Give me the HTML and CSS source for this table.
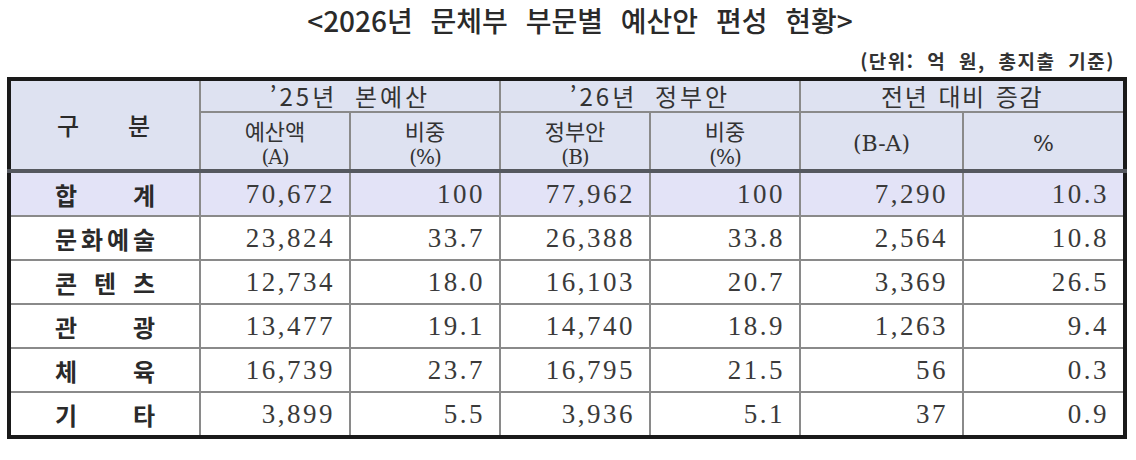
FILE: index.html
```html
<!DOCTYPE html>
<html lang="ko">
<head>
<meta charset="utf-8">
<link rel="stylesheet" href="styles.css">
</head>
<body>
<div class="page">
  <h1 class="title">&lt;2026년 문체부 부문별 예산안 편성 현황&gt;</h1>
  <div class="unit">(단위: 억 원, 총지출 기준)</div>
  <table class="budget">
    <colgroup>
      <col class="c-label"><col class="c-num"><col class="c-num"><col class="c-num"><col class="c-num"><col class="c-diff"><col class="c-pct">
    </colgroup>
    <thead>
      <tr class="h1">
        <th rowspan="2" class="label-head"><span class="dist"><span>구</span><span>분</span></span></th>
        <th colspan="2">’25년 본예산</th>
        <th colspan="2">’26년 정부안</th>
        <th colspan="2" class="tight">전년 대비 증감</th>
      </tr>
      <tr class="h2">
        <th><span class="stack"><span class="top">예산액</span><span class="sub">(A)</span></span></th>
        <th><span class="stack"><span class="top">비중</span><span class="sub">(%)</span></span></th>
        <th><span class="stack"><span class="top">정부안</span><span class="sub">(B)</span></span></th>
        <th><span class="stack"><span class="top">비중</span><span class="sub">(%)</span></span></th>
        <th><span class="single">(B-A)</span></th>
        <th><span class="single">%</span></th>
      </tr>
    </thead>
    <tbody>
      <tr class="total">
        <th><span class="dist"><span>합</span><span>계</span></span></th>
        <td>70,672</td><td>100</td><td>77,962</td><td>100</td><td>7,290</td><td>10.3</td>
      </tr>
      <tr>
        <th><span class="dist"><span>문</span><span>화</span><span>예</span><span>술</span></span></th>
        <td>23,824</td><td>33.7</td><td>26,388</td><td>33.8</td><td>2,564</td><td>10.8</td>
      </tr>
      <tr>
        <th><span class="dist"><span>콘</span><span>텐</span><span>츠</span></span></th>
        <td>12,734</td><td>18.0</td><td>16,103</td><td>20.7</td><td>3,369</td><td>26.5</td>
      </tr>
      <tr>
        <th><span class="dist"><span>관</span><span>광</span></span></th>
        <td>13,477</td><td>19.1</td><td>14,740</td><td>18.9</td><td>1,263</td><td>9.4</td>
      </tr>
      <tr>
        <th><span class="dist"><span>체</span><span>육</span></span></th>
        <td>16,739</td><td>23.7</td><td>16,795</td><td>21.5</td><td>56</td><td>0.3</td>
      </tr>
      <tr class="last">
        <th><span class="dist"><span>기</span><span>타</span></span></th>
        <td>3,899</td><td>5.5</td><td>3,936</td><td>5.1</td><td>37</td><td>0.9</td>
      </tr>
    </tbody>
  </table>
</div>
</body>
</html>
```

FILE: styles.css
```css
html, body {
  margin: 0;
  padding: 0;
  background: #ffffff;
}

.page {
  width: 1136px;
  height: 460px;
  overflow: hidden;
  padding: 0 9px 0 7px;
  box-sizing: border-box;
  color: #2b2b2b;
}

.title {
  margin: 0;
  padding: 2px 0 0 26px;
  height: 42px;
  box-sizing: border-box;
  text-align: center;
  font-family: "Noto Sans CJK KR", sans-serif;
  font-weight: 500;
  font-size: 28px;
  line-height: 36px;
  word-spacing: 10px;
  color: #2a2a2a;
}

.unit {
  height: 35px;
  text-align: right;
  padding: 7px 12px 0 0;
  box-sizing: border-box;
  font-family: "Noto Sans CJK KR", sans-serif;
  font-weight: 700;
  font-size: 19px;
  line-height: 24px;
  letter-spacing: 1.5px;
  word-spacing: 6px;
  color: #333;
}

.budget {
  width: 1120px;
  border-collapse: collapse;
  table-layout: fixed;
  border: 4px solid #1a1a1a;
}

.c-label { width: 191px; }
.c-num { width: 150px; }
.c-diff { width: 163px; }
.c-pct { width: 162px; }

.budget th,
.budget td {
  border: 2px solid #8a8a8a;
  padding: 0;
}

.budget thead th {
  background: #dee2f1;
  font-family: "Noto Sans CJK KR", sans-serif;
  font-weight: 400;
  color: #333;
  text-align: center;
}

.h1 th {
  height: 30px;
  font-size: 24px;
  line-height: 26px;
  letter-spacing: 3px;
  word-spacing: 8px;
}

.h1 th.tight {
  letter-spacing: 1.5px;
  word-spacing: 2px;
}

.h2 th {
  height: 56px;
  font-size: 22px;
  border-bottom: 4px solid #55585f;
}

.label-head {
  border-bottom: 4px solid #55585f !important;
}

.stack {
  display: inline-flex;
  flex-direction: column;
  align-items: center;
}

.top {
  line-height: 30px;
}

.sub {
  font-family: "DejaVu Serif", "Liberation Serif", serif;
  font-size: 20px;
  line-height: 24px;
  letter-spacing: -1px;
}

.single {
  font-family: "DejaVu Serif", "Liberation Serif", serif;
  font-size: 22px;
}

.dist {
  display: flex;
  justify-content: space-between;
  width: 100px;
  margin: 0 auto;
  font-family: "Noto Sans CJK KR", sans-serif;
  font-weight: 700;
  font-size: 24px;
  color: #2a2a2a;
}

.label-head .dist {
  width: 96px;
  font-weight: 500;
  font-size: 24px;
}

.budget tbody th {
  text-align: center;
  height: 42px;
}

.budget tbody td {
  text-align: right;
  padding-right: 14px;
  font-family: "Liberation Serif", serif;
  font-size: 27px;
  letter-spacing: 2.5px;
  color: #3a3a3a;
}

.total th,
.total td {
  background: #e3e3f7;
  color: #1f1f1f;
}
```
